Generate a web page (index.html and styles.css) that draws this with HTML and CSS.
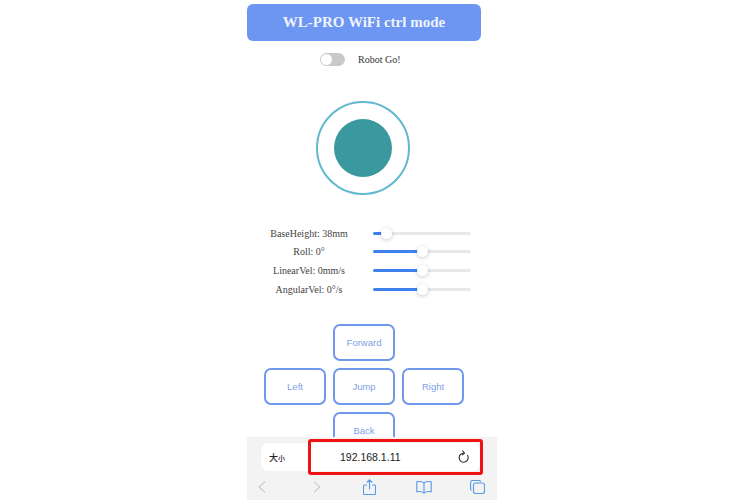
FILE: index.html
```html
<!DOCTYPE html>
<html lang="en">
<head>
<meta charset="utf-8">
<title>WL-PRO WiFi ctrl mode</title>
<link rel="stylesheet" href="styles.css">
</head>
<body>
<div class="phone">
  <main class="content">
    <h1 class="title">WL-PRO WiFi ctrl mode</h1>
    <div class="go-row">
      <span class="toggle"><span class="knob"></span></span>
      <span class="go-label">Robot Go!</span>
    </div>
    <div class="joystick"><div class="stick"></div></div>
    <div class="sliders">
      <div class="slider-row"><span class="slider-label">BaseHeight: 38mm</span><span class="track"><span class="fill fill-low"></span><span class="thumb"></span></span></div>
      <div class="slider-row"><span class="slider-label">Roll: 0°</span><span class="track"><span class="fill"></span><span class="thumb"></span></span></div>
      <div class="slider-row"><span class="slider-label">LinearVel: 0mm/s</span><span class="track"><span class="fill"></span><span class="thumb"></span></span></div>
      <div class="slider-row"><span class="slider-label">AngularVel: 0°/s</span><span class="track"><span class="fill"></span><span class="thumb"></span></span></div>
    </div>
    <div class="pad">
      <button class="pad-btn pad-forward">Forward</button>
      <button class="pad-btn pad-left">Left</button>
      <button class="pad-btn pad-jump">Jump</button>
      <button class="pad-btn pad-right">Right</button>
      <button class="pad-btn pad-back">Back</button>
    </div>
  </main>
  <footer class="browser">
    <div class="address">
      <span class="aa">大<small>小</small></span>
      <span class="url">192.168.1.11</span>
      <svg class="reload" viewBox="0 0 11 14" width="11" height="14" fill="none" stroke="#2a2a2a" stroke-width="1.1"><path d="M6 3.200A4.500 4.500 0 1 0 9.300 5"/><path d="M4.300 .5 6.500 3.100 3.900 5"/></svg>
    </div>
    <nav class="tools">
      <svg viewBox="0 0 8 12" width="8" height="12" fill="none" stroke="#c6c8cc" stroke-width="1.100"><path d="M7 .6 1.200 6 7 11.400"/></svg>
      <svg viewBox="0 0 8 12" width="8" height="12" fill="none" stroke="#c6c8cc" stroke-width="1.100"><path d="M1 .6 6.800 6 1 11.400"/></svg>
      <svg viewBox="0 0 13 16" width="13" height="16" fill="none" stroke="#5b9ae8" stroke-width="1.100"><path d="M4 6H1.500a1 1 0 0 0-1 1v7.500a1 1 0 0 0 1 1h10a1 1 0 0 0 1-1V7a1 1 0 0 0-1-1H9M6.500 10.500V1M3.800 3.500 6.500.8l2.700 2.700"/></svg>
      <svg viewBox="0 0 16 13" width="16" height="13" fill="none" stroke="#5b9ae8" stroke-width="1.100"><path d="M8 2C6.500.7 3.500.3.800.8v10c2.700-.5 5.700-.1 7.200 1.400 1.500-1.500 4.500-1.900 7.200-1.400V.8C12.500.3 9.500.7 8 2Zm0 0v10"/></svg>
      <svg viewBox="0 0 15 14" width="15" height="14" fill="none" stroke="#5b9ae8" stroke-width="1.100"><rect x="3.500" y="3" width="11" height="10.500" rx="2"/><path d="M1.900 10.300A1.500 1.500 0 0 1 .6 8.800V2.500a2 2 0 0 1 2-2h6.500a1.500 1.500 0 0 1 1.500 1.500"/></svg>
    </nav>
  </footer>
  <div class="highlight"></div>
</div>
</body>
</html>
```
FILE: styles.css
```css
* { box-sizing: border-box; }
html, body { margin: 0; height: 100%; background: #fff; overflow: hidden; }
.phone { position: relative; width: 250px; height: 500px; margin-left: 247px; display: flex; flex-direction: column; font-family: "Liberation Serif", serif; }
.content { height: 437px; overflow: hidden; padding-top: 4px; }
.title { width: 234px; height: 37px; margin: 0; background: #6c96f2; border-radius: 6px; color: #eef3fd; font-size: 15px; font-weight: 700; line-height: 37px; text-align: center; }
.go-row { display: flex; align-items: center; height: 13px; margin-top: 12px; padding-left: 73px; gap: 13px; }
.toggle { display: block; width: 25px; height: 13px; padding: 1px; border-radius: 7px; background: #c9c9c9; }
.knob { display: block; width: 11px; height: 11px; border-radius: 50%; background: #fff; }
.go-label { font-size: 10px; color: #333; }
.joystick { width: 94px; height: 94px; margin: 35px 0 0 69px; border: 2px solid #62b8cf; border-radius: 50%; display: flex; align-items: center; justify-content: center; }
.stick { width: 58px; height: 58px; border-radius: 50%; background: #3a989f; }
.sliders { margin-top: 31px; display: flex; flex-direction: column; gap: 4.700px; }
.slider-row { display: flex; align-items: center; height: 14px; }
.slider-label { width: 124px; margin-right: 2px; text-align: center; font-size: 10px; color: #444; }
.track { position: relative; display: block; width: 98px; height: 3px; border-radius: 2px; background: #e8e8e8; }
.fill { display: block; width: 50%; height: 100%; border-radius: 2px; background: #3f82ee; }
.fill-low { width: 14%; }
.thumb { position: absolute; left: 50%; top: -4px; width: 11px; height: 11px; margin-left: -5.500px; border-radius: 50%; background: #fff; box-shadow: 0 1px 4px rgba(0,0,0,.22); }
.fill-low + .thumb { left: 14%; }
.pad { display: grid; grid-template-columns: repeat(3, 62px); grid-auto-rows: 37px; gap: 7px; margin: 28px 0 0 17px; }
.pad-btn { padding: 0; background: #fff; border: 2px solid #7098ec; border-radius: 7px; color: #7f9fe4; font-family: "Liberation Sans", Arial, sans-serif; font-size: 9.500px; }
.pad-forward { grid-column: 2; grid-row: 1; }
.pad-left { grid-column: 1; grid-row: 2; }
.pad-jump { grid-column: 2; grid-row: 2; }
.pad-right { grid-column: 3; grid-row: 2; }
.pad-back { grid-column: 2; grid-row: 3; }
.browser { height: 63px; background: #f3f3f4; padding-top: 6px; }
.address { display: flex; align-items: center; width: 219px; height: 28px; margin-left: 14px; background: #fff; border-radius: 7px; }
.aa { width: 47px; padding-left: 8px; font-family: "Noto Sans CJK SC", sans-serif; font-size: 9px; font-weight: 500; color: #222; }
.aa small { font-size: 7px; }
.url { width: 114px; padding-left: 32px; font-family: "Liberation Sans", Arial, sans-serif; font-size: 10.500px; color: #222; white-space: nowrap; }
.reload { margin-left: 36px; }
.tools { display: grid; grid-template-columns: 55px 50px 53px 54px auto; align-items: center; justify-content: start; height: 16px; margin-top: 8px; padding-left: 11px; }
.highlight { position: absolute; left: 61px; top: 439px; width: 175px; height: 36px; border: 3.500px solid #ef1212; border-radius: 3px; }
```
